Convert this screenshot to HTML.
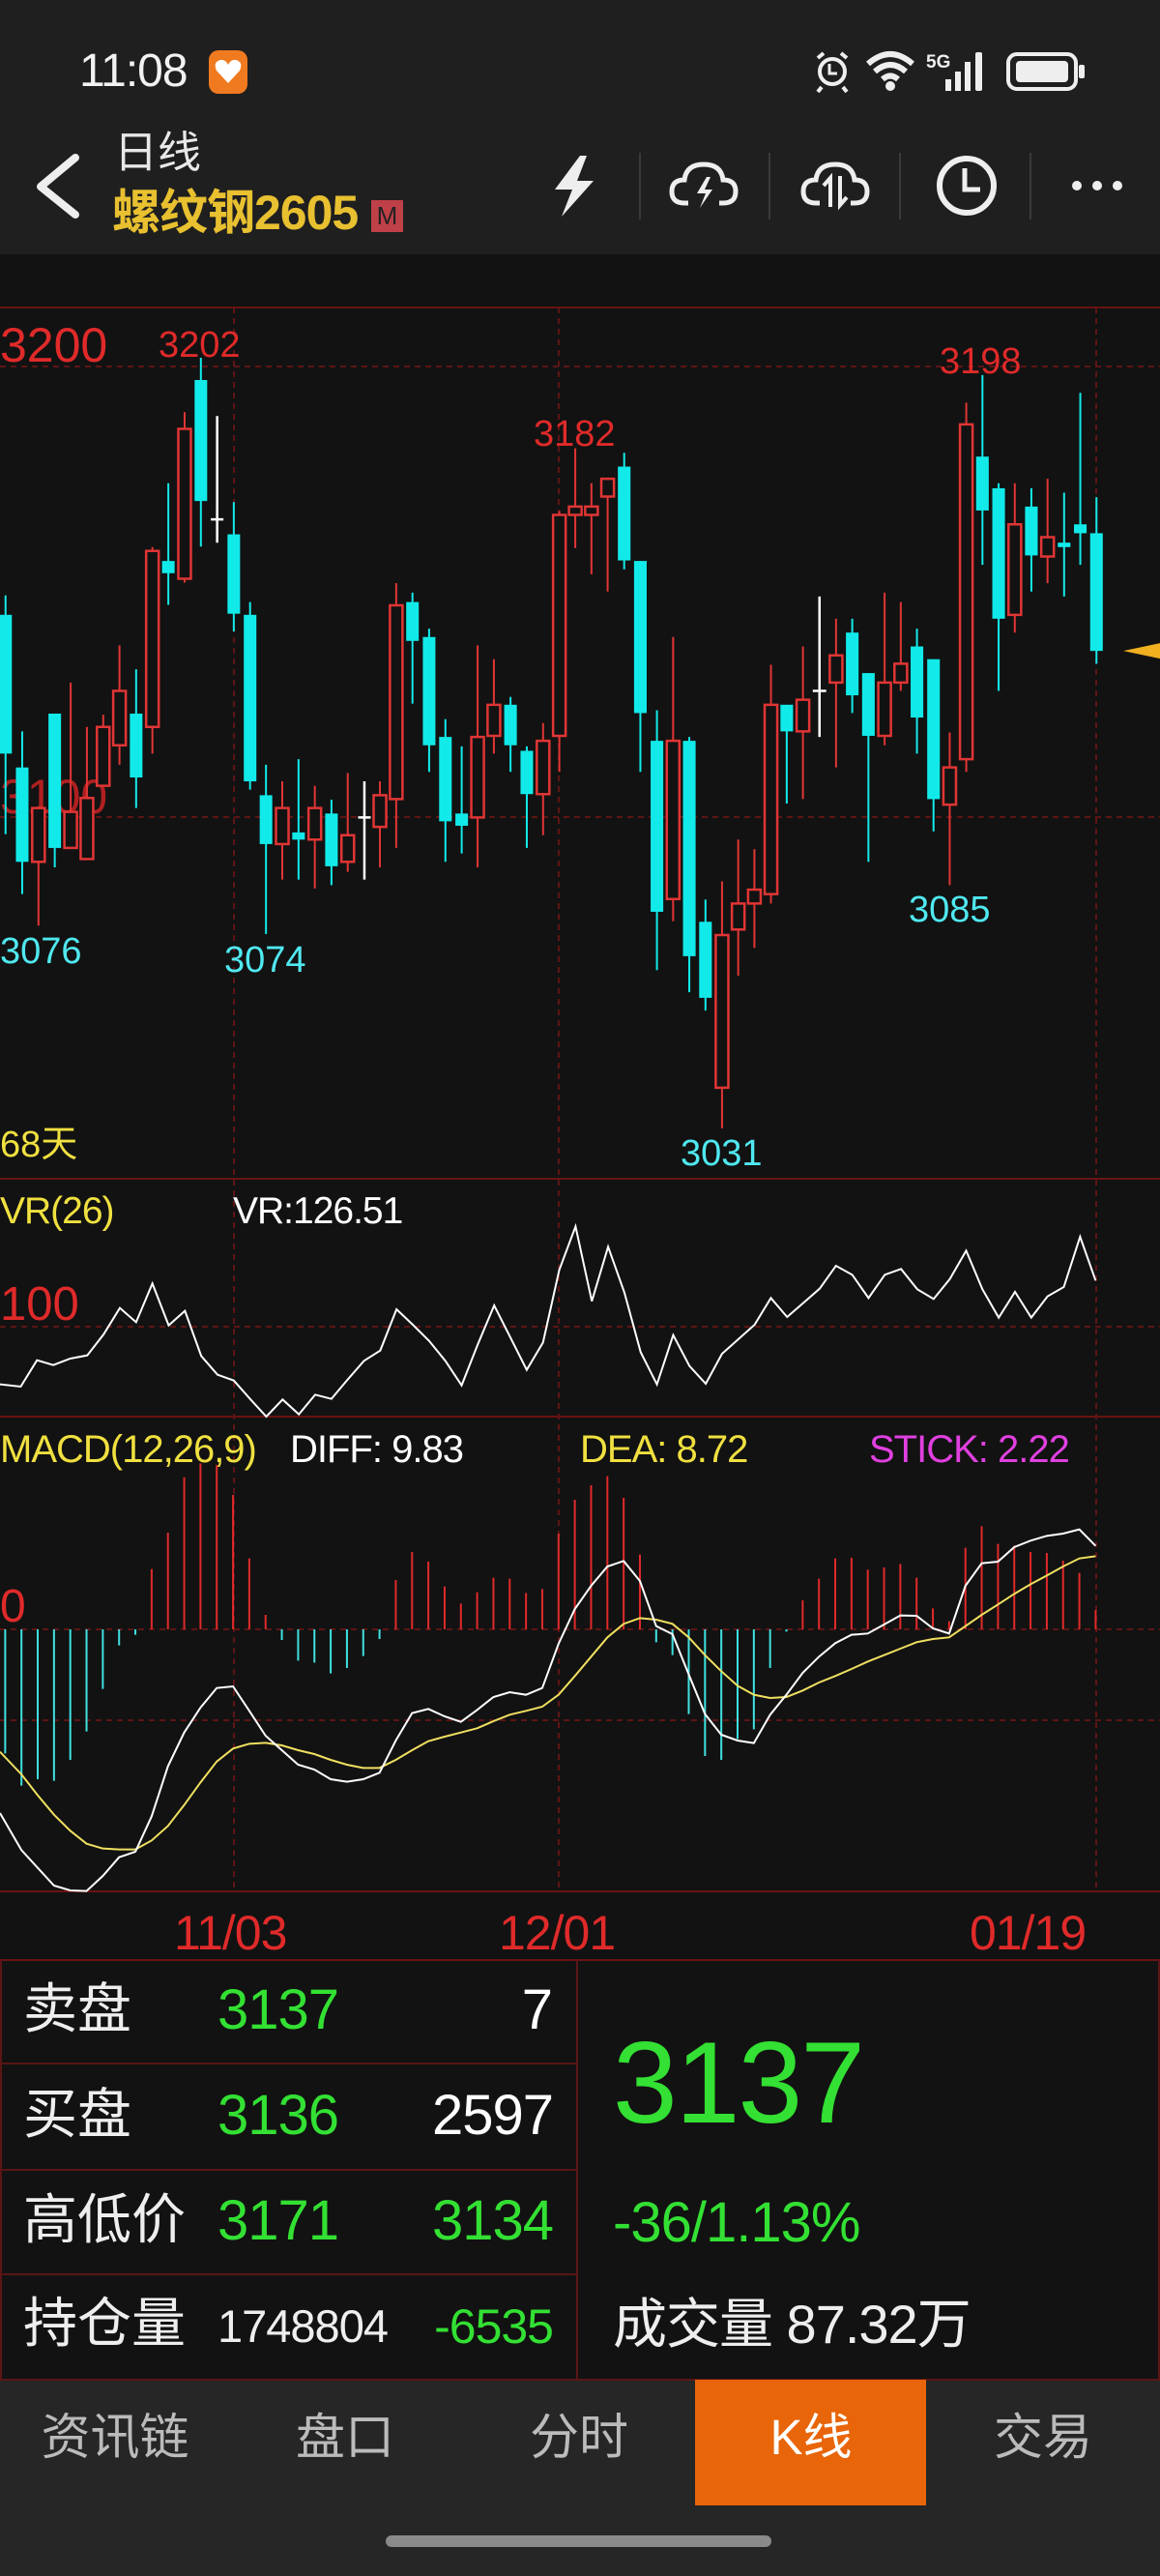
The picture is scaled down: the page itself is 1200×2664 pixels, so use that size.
<!DOCTYPE html>
<html><head><meta charset="utf-8">
<style>
*{margin:0;padding:0;box-sizing:border-box}
body{width:1200px;height:2664px;background:#121212;position:relative;overflow:hidden;font-family:"Liberation Sans","Noto Sans CJK SC",sans-serif;}
.t{position:absolute;white-space:nowrap;line-height:1}
.hdr{position:absolute;left:0;top:0;width:1200px;height:263px;background:#1f1f1f}
.nav{position:absolute;left:0;top:2461px;width:1200px;height:203px;background:#262626}
.cn{font-family:"Liberation Sans","Noto Sans CJK SC",sans-serif}
</style></head><body>
<div class="hdr"></div>
<div class="nav"></div>

<svg width="1200" height="2664" style="position:absolute;left:0;top:0">
<g fill="none" stroke="#eee" stroke-width="3">
<rect x="216" y="52" width="40" height="45" rx="10" fill="#f07a20" stroke="none"/>
<path d="M236 86 L224 73 Q220 64 228 62 Q233 61 236 67 Q239 61 244 62 Q252 64 248 73 Z" fill="#fff" stroke="none"/>
<circle cx="861" cy="74" r="13" stroke-width="4"/><path d="M858 66 V76 H866" stroke-width="3"/>
<path d="M846 60 l6 -5 M876 60 l-6 -5 M850 90 l-4 5 M872 90 l4 5" stroke-width="4"/>
<path d="M898 66 Q921 46 944 66 M905 74 Q921 60 937 74 M913 82 Q921 75 929 82" stroke-width="6"/>
<circle cx="921" cy="89" r="5" fill="#eee" stroke="none"/>
<text x="958" y="70" fill="#eee" stroke="none" font-size="19" font-weight="bold" font-family="Liberation Sans">5G</text>
<g fill="#eee" stroke="none"><rect x="978" y="82" width="6" height="12"/><rect x="988" y="74" width="6" height="20"/><rect x="998" y="64" width="6" height="30"/><rect x="1009" y="54" width="7" height="40" rx="2"/></g>
<rect x="1043" y="56" width="70" height="36" rx="9" stroke-width="4"/>
<rect x="1051" y="63" width="54" height="22" rx="4" fill="#eee" stroke="none"/>
<rect x="1116" y="67" width="6" height="14" rx="2" fill="#eee" stroke="none"/>
<path d="M78 163 L42 193 L78 222" stroke-width="8" stroke-linecap="round" stroke-linejoin="round"/>
<path d="M600 161 L574 196 H592 L581 224 L614 187 H597 L607 161 Z" fill="#eee" stroke="none"/>
<g stroke="#3a3a3a" stroke-width="2"><path d="M662 158 V227 M796 158 V227 M931 158 V227 M1066 158 V227"/></g>
<path d="M712 210 H708 Q695 210 695 198 Q695 186 708 186 Q710 170 728 170 Q746 170 748 186 Q761 186 761 198 Q761 210 748 210 H744" stroke-width="5"/>
<path d="M731 183 L721 200 H730 L724 215 L737 196 H729 L735 183Z" fill="#eee" stroke="none"/>
<path d="M848 210 H844 Q831 210 831 198 Q831 186 844 186 Q846 170 864 170 Q882 170 884 186 Q897 186 897 198 Q897 210 884 210 H880" stroke-width="5"/>
<path d="M859 214 V184 L852 192 M869 182 V212 L876 204" stroke-width="4"/>
<circle cx="1000" cy="192" r="28" stroke-width="6"/><path d="M998 174 V196 H1014" stroke-width="5"/>
<g fill="#eee" stroke="none"><circle cx="1114" cy="192" r="5"/><circle cx="1135" cy="192" r="5"/><circle cx="1156" cy="192" r="5"/></g>
</g>

<g stroke="#6a1212" stroke-width="2" fill="none">
<path d="M0 318 H1200 M0 1219 H1200 M0 1465 H1200 M0 1956 H1200 M0 2027 H1200"/>
</g>
<g stroke="#5e1515" stroke-width="2" stroke-dasharray="6 5" fill="none">
<path d="M0 379 H1200 M0 845 H1200 M0 1372 H1200 M0 1685 H1200 M0 1779 H1200"/>
<path d="M242 318 V1956 M578 318 V1956 M1134 318 V1956"/>
</g>

<text x="0" y="841" font-size="50" fill="#b02020" font-family="Liberation Sans">3100</text>

<g transform="translate(0,300) scale(0.3827,0.57405)">
<g stroke="#12eaea" stroke-width="2" fill="#12eaea">
<path vector-effect="non-scaling-stroke" d="M15 550V980M60 795V1088M148 763V1040M368 683V933M455 348V567M543 122V462M632 382V615M676 562V900M719 855V1160M807 845V1062M896 918V1072M1115 545V745M1160 610V868M1204 773V1030M1248 822V1015M1380 733V868M1424 822V1005"/>
<g stroke="none"><rect x="-2" y="585" width="34" height="250"/><rect x="43" y="860" width="34" height="170"/><rect x="131" y="763" width="34" height="242"/><rect x="351" y="763" width="34" height="115"/><rect x="438" y="488" width="34" height="22"/><rect x="526" y="162" width="34" height="218"/><rect x="615" y="440" width="34" height="143"/><rect x="659" y="585" width="34" height="300"/><rect x="702" y="910" width="34" height="88"/><rect x="790" y="977" width="34" height="13"/><rect x="879" y="943" width="34" height="95"/><rect x="1098" y="562" width="34" height="70"/><rect x="1143" y="625" width="34" height="195"/><rect x="1187" y="805" width="34" height="152"/><rect x="1231" y="943" width="34" height="22"/><rect x="1363" y="747" width="34" height="73"/><rect x="1407" y="830" width="34" height="78"/></g>
</g>
<g stroke="#e03535" fill="#121212">
<path vector-effect="non-scaling-stroke" stroke-width="2" d="M104 930V1145M191 707V1005M235 787V1025M279 765V893M323 640V855M412 463V835M499 220V527M763 885V1062M851 893V1078M940 870V1048M1027 885V1040M1071 528V1005M1291 640V1040M1335 665V835M1468 780V982M1512 398V868M1555 285V465"/>
<g stroke-width="2.5"><rect vector-effect="non-scaling-stroke" x="87" y="933" width="34" height="97"/><rect vector-effect="non-scaling-stroke" x="174" y="940" width="34" height="65"/><rect vector-effect="non-scaling-stroke" x="218" y="915" width="34" height="110"/><rect vector-effect="non-scaling-stroke" x="262" y="787" width="34" height="106"/><rect vector-effect="non-scaling-stroke" x="306" y="722" width="34" height="98"/><rect vector-effect="non-scaling-stroke" x="395" y="470" width="34" height="317"/><rect vector-effect="non-scaling-stroke" x="482" y="250" width="34" height="270"/><rect vector-effect="non-scaling-stroke" x="746" y="933" width="34" height="65"/><rect vector-effect="non-scaling-stroke" x="834" y="933" width="34" height="57"/><rect vector-effect="non-scaling-stroke" x="923" y="982" width="34" height="48"/><rect vector-effect="non-scaling-stroke" x="1010" y="910" width="34" height="57"/><rect vector-effect="non-scaling-stroke" x="1054" y="568" width="34" height="349"/><rect vector-effect="non-scaling-stroke" x="1274" y="805" width="34" height="145"/><rect vector-effect="non-scaling-stroke" x="1318" y="747" width="34" height="56"/><rect vector-effect="non-scaling-stroke" x="1451" y="812" width="34" height="96"/><rect vector-effect="non-scaling-stroke" x="1495" y="405" width="34" height="398"/></g>
</g>
<path vector-effect="non-scaling-stroke" stroke="#fff" stroke-width="2.5" fill="none" d="M587 227V455M570 413H604M985 885V1062M968 950H1002"/>
</g>

<g transform="translate(560,300) scale(0.40816,0.57405)">
<g stroke="#12eaea" fill="#12eaea">
<path vector-effect="non-scaling-stroke" stroke-width="2" d="M210 293V503M251 488V868M293 757V1225M375 805V1265M416 1098V1298M622 747V925M788 592V762M829 690V1030M952 610V835M994 665V975M1118 153V495M1159 348V722M1242 357V543M1325 365V552M1366 185V495M1407 373V673"/>
<g stroke="none"><rect x="194" y="318" width="32" height="169"/><rect x="235" y="488" width="32" height="274"/><rect x="277" y="812" width="32" height="308"/><rect x="359" y="812" width="32" height="388"/><rect x="400" y="1138" width="32" height="137"/><rect x="606" y="747" width="32" height="48"/><rect x="772" y="617" width="32" height="113"/><rect x="813" y="690" width="32" height="113"/><rect x="936" y="642" width="32" height="128"/><rect x="978" y="665" width="32" height="252"/><rect x="1102" y="300" width="32" height="97"/><rect x="1143" y="357" width="32" height="235"/><rect x="1226" y="390" width="32" height="88"/><rect x="1309" y="455" width="32" height="8"/><rect x="1350" y="422" width="32" height="16"/><rect x="1391" y="438" width="32" height="212"/></g>
</g>
<g stroke="#e03535" fill="#121212">
<path vector-effect="non-scaling-stroke" stroke-width="2" d="M127 348V512M168 338V543M334 625V1137M458 1065V1510M499 990V1235M540 1007V1185M582 675V1105M663 642V917M747 592V860M870 545V820M911 562V722M1035 797V1072M1077 203V868M1200 348V617M1283 340V528"/>
<g stroke-width="2.5"><rect vector-effect="non-scaling-stroke" x="70" y="390" width="32" height="15"/><rect vector-effect="non-scaling-stroke" x="111" y="390" width="32" height="15"/><rect vector-effect="non-scaling-stroke" x="152" y="340" width="32" height="32"/><rect vector-effect="non-scaling-stroke" x="318" y="812" width="32" height="285"/><rect vector-effect="non-scaling-stroke" x="442" y="1162" width="32" height="275"/><rect vector-effect="non-scaling-stroke" x="483" y="1105" width="32" height="47"/><rect vector-effect="non-scaling-stroke" x="524" y="1080" width="32" height="25"/><rect vector-effect="non-scaling-stroke" x="566" y="747" width="32" height="341"/><rect vector-effect="non-scaling-stroke" x="647" y="738" width="32" height="57"/><rect vector-effect="non-scaling-stroke" x="731" y="658" width="32" height="49"/><rect vector-effect="non-scaling-stroke" x="854" y="707" width="32" height="96"/><rect vector-effect="non-scaling-stroke" x="895" y="673" width="32" height="34"/><rect vector-effect="non-scaling-stroke" x="1019" y="860" width="32" height="67"/><rect vector-effect="non-scaling-stroke" x="1061" y="242" width="32" height="603"/><rect vector-effect="non-scaling-stroke" x="1184" y="422" width="32" height="163"/><rect vector-effect="non-scaling-stroke" x="1267" y="445" width="32" height="35"/></g>
</g>
<path vector-effect="non-scaling-stroke" stroke="#fff" stroke-width="2.5" fill="none" d="M705 552V805M688 722H722"/>
<polygon points="1475,650 1568,636 1568,664" fill="#f0b020"/>
</g>

<g transform="translate(0,1200) scale(0.7653,0.33333)">
<polyline vector-effect="non-scaling-stroke" fill="none" stroke="#fff" stroke-width="2" points="0,695 28,702 50,620 72,635 95,615 118,605 140,540 162,458 184,502 206,382 228,512 250,467 272,607 294,665 316,683 338,740 360,795 382,742 404,788 426,727 448,740 470,680 492,622 514,590 536,462 558,510 580,560 602,622 624,698 646,570 668,450 690,550 712,650 734,565 756,340 778,205 800,437 822,268 844,410 866,595 888,695 910,542 932,638 954,693 976,600 998,555 1020,510 1042,427 1064,486 1086,442 1108,398 1130,327 1152,355 1174,427 1196,355 1218,337 1240,400 1262,430 1284,368 1306,280 1328,400 1350,488 1372,408 1394,488 1416,422 1438,393 1460,237 1481,373"/>
</g>

<g transform="translate(0,1480) scale(0.7653,0.33333)">
<path vector-effect="non-scaling-stroke" stroke="#40e0e0" stroke-width="2" d="M7 615V1000M29 615V1100M51 615V1080M73 615V1085M95 615V1020M117 615V932M139 615V800M161 615V665M183 615V632M381 615V648M403 615V712M425 615V718M447 615V752M469 615V735M491 615V698M513 615V645M887 615V655M909 615V695M931 615V878M953 615V1008M975 615V1020M997 615V955M1019 615V925M1041 615V735M1063 615V622"/>
<path vector-effect="non-scaling-stroke" stroke="#e02a2a" stroke-width="2" d="M205 615V428M227 615V315M249 615V143M271 615V100M293 615V105M315 615V198M337 615V395M359 615V570M535 615V462M557 615V375M579 615V405M601 615V482M623 615V535M645 615V500M667 615V455M689 615V458M711 615V502M733 615V490M755 615V318M777 615V213M799 615V168M821 615V140M843 615V207M865 615V383M1085 615V525M1107 615V458M1129 615V395M1151 615V393M1173 615V430M1195 615V423M1217 615V412M1239 615V455M1261 615V550M1283 615V590M1305 615V362M1327 615V295M1349 615V350M1371 615V355M1393 615V375M1415 615V378M1437 615V402M1459 615V440M1481 615V555"/>
<polyline vector-effect="non-scaling-stroke" fill="none" stroke="#f0e060" stroke-width="2" points="0,995 29,1065 51,1130 73,1190 95,1240 117,1280 139,1295 161,1298 183,1298 205,1270 227,1225 249,1160 271,1090 293,1025 315,985 337,970 359,967 381,975 403,990 425,1002 447,1020 469,1035 491,1045 513,1045 535,1020 557,990 579,962 601,948 623,935 645,922 667,900 689,880 711,868 733,855 755,818 777,760 799,700 821,640 843,598 865,580 887,585 909,598 931,640 953,695 975,745 997,790 1019,818 1041,828 1063,825 1085,805 1107,780 1129,760 1151,738 1173,715 1195,695 1217,675 1239,655 1261,645 1283,640 1305,605 1327,570 1349,538 1371,505 1393,475 1415,448 1437,420 1459,395 1481,388"/>
<polyline vector-effect="non-scaling-stroke" fill="none" stroke="#fff" stroke-width="2" points="0,1185 29,1300 51,1355 73,1410 95,1425 117,1427 139,1380 161,1322 183,1305 205,1195 227,1040 249,935 271,858 293,797 315,792 337,868 359,945 381,990 403,1035 425,1050 447,1080 469,1088 491,1080 513,1060 535,960 557,875 579,862 601,885 623,902 645,865 667,825 689,810 711,818 733,797 755,660 777,552 799,480 821,420 843,403 865,465 887,605 909,630 931,755 953,878 975,942 997,960 1019,968 1041,880 1063,818 1085,750 1107,700 1129,658 1151,632 1173,628 1195,600 1217,572 1239,573 1261,612 1283,628 1305,480 1327,410 1349,405 1371,360 1393,340 1415,325 1437,318 1459,305 1481,356"/>
</g>

<g stroke="#5a1515" stroke-width="2" fill="none">
<path d="M0 2134 H597 M0 2244 H597 M0 2352 H597 M0 2461 H1200 M597 2027 V2461 M1 2027 V2461 M1199 2027 V2461"/>
</g>
<rect x="719" y="2461" width="239" height="130" fill="#e8650a"/>
<rect x="399" y="2622" width="399" height="12" rx="6" fill="#8a8a8a"/>
</svg>

<div class="t" style="left:82px;top:50px;font-size:48px;color:#f2f2f2;letter-spacing:-1px">11:08</div>
<div class="t cn" style="left:118px;top:135px;font-size:45px;color:#e8e8e8">日线</div>
<div class="t cn" style="left:116px;top:195px;font-size:50px;color:#e8c030;font-weight:bold;letter-spacing:-1px">螺纹钢2605</div>
<div class="t" style="left:384px;top:207px;width:33px;height:33px;background:#c04048;color:#222;font-size:26px;text-align:center;line-height:33px">M</div>

<div class="t" style="left:0;top:332px;font-size:50px;color:#e02a2a">3200</div>
<div class="t" style="left:164px;top:338px;font-size:38px;color:#e02a2a">3202</div>
<div class="t" style="left:552px;top:430px;font-size:38px;color:#e02a2a">3182</div>
<div class="t" style="left:972px;top:355px;font-size:38px;color:#e02a2a">3198</div>
<div class="t" style="left:0;top:965px;font-size:38px;color:#50e8f0">3076</div>
<div class="t" style="left:232px;top:974px;font-size:38px;color:#50e8f0">3074</div>
<div class="t" style="left:940px;top:922px;font-size:38px;color:#50e8f0">3085</div>
<div class="t" style="left:704px;top:1174px;font-size:38px;color:#50e8f0">3031</div>
<div class="t cn" style="left:0;top:1165px;font-size:38px;color:#f0e040">68天</div>

<div class="t" style="left:0;top:1233px;font-size:39px;color:#f0e040;letter-spacing:-1px">VR(26)</div>
<div class="t" style="left:241px;top:1233px;font-size:39px;color:#fff;letter-spacing:-1px">VR:126.51</div>
<div class="t" style="left:0;top:1325px;font-size:49px;color:#e02a2a">100</div>

<div class="t" style="left:0;top:1479px;font-size:40px;color:#f0e040;letter-spacing:-1px">MACD(12,26,9)</div>
<div class="t" style="left:300px;top:1479px;font-size:40px;color:#fff;letter-spacing:-1px">DIFF: 9.83</div>
<div class="t" style="left:600px;top:1479px;font-size:40px;color:#f0e040;letter-spacing:-1px">DEA: 8.72</div>
<div class="t" style="left:899px;top:1479px;font-size:40px;color:#e040e0;letter-spacing:-1px">STICK: 2.22</div>
<div class="t" style="left:0;top:1638px;font-size:48px;color:#e02a2a">0</div>

<div class="t" style="left:180px;top:1974px;font-size:50px;color:#e02a2a;letter-spacing:-1px">11/03</div>
<div class="t" style="left:516px;top:1974px;font-size:50px;color:#e02a2a;letter-spacing:-1px">12/01</div>
<div class="t" style="left:1003px;top:1974px;font-size:50px;color:#e02a2a;letter-spacing:-1px">01/19</div>

<div class="t cn" style="left:24px;top:2050px;font-size:56px;color:#eee">卖盘</div>
<div class="t" style="left:225px;top:2050px;font-size:58px;color:#33e033;letter-spacing:-1px">3137</div>
<div class="t" style="left:470px;width:102px;text-align:right;top:2050px;font-size:58px;color:#fff">7</div>
<div class="t cn" style="left:24px;top:2159px;font-size:56px;color:#eee">买盘</div>
<div class="t" style="left:225px;top:2159px;font-size:58px;color:#33e033;letter-spacing:-1px">3136</div>
<div class="t" style="left:400px;width:172px;text-align:right;top:2159px;font-size:58px;color:#fff;letter-spacing:-1px">2597</div>
<div class="t cn" style="left:24px;top:2268px;font-size:56px;color:#eee">高低价</div>
<div class="t" style="left:225px;top:2268px;font-size:58px;color:#33e033;letter-spacing:-1px">3171</div>
<div class="t" style="left:400px;width:172px;text-align:right;top:2268px;font-size:58px;color:#33e033;letter-spacing:-1px">3134</div>
<div class="t cn" style="left:24px;top:2375px;font-size:56px;color:#eee">持仓量</div>
<div class="t" style="left:225px;top:2382px;font-size:47px;color:#eee;letter-spacing:-1px">1748804</div>
<div class="t" style="left:400px;width:172px;text-align:right;top:2381px;font-size:50px;color:#33e033;letter-spacing:-1px">-6535</div>

<div class="t" style="left:634px;top:2094px;font-size:120px;color:#33e033;letter-spacing:-2px">3137</div>
<div class="t" style="left:634px;top:2270px;font-size:58px;color:#33e033;letter-spacing:-1px">-36/1.13%</div>
<div class="t cn" style="left:634px;top:2376px;font-size:56px;color:#eee;letter-spacing:-1px">成交量 87.32万</div>

<div class="t cn" style="left:39px;width:160px;text-align:center;top:2495px;font-size:51px;color:#bbb">资讯链</div>
<div class="t cn" style="left:277px;width:160px;text-align:center;top:2495px;font-size:51px;color:#bbb">盘口</div>
<div class="t cn" style="left:519px;width:160px;text-align:center;top:2495px;font-size:51px;color:#bbb">分时</div>
<div class="t cn" style="left:759px;width:160px;text-align:center;top:2495px;font-size:51px;color:#fff">K线</div>
<div class="t cn" style="left:999px;width:160px;text-align:center;top:2495px;font-size:51px;color:#bbb">交易</div>
</body></html>
